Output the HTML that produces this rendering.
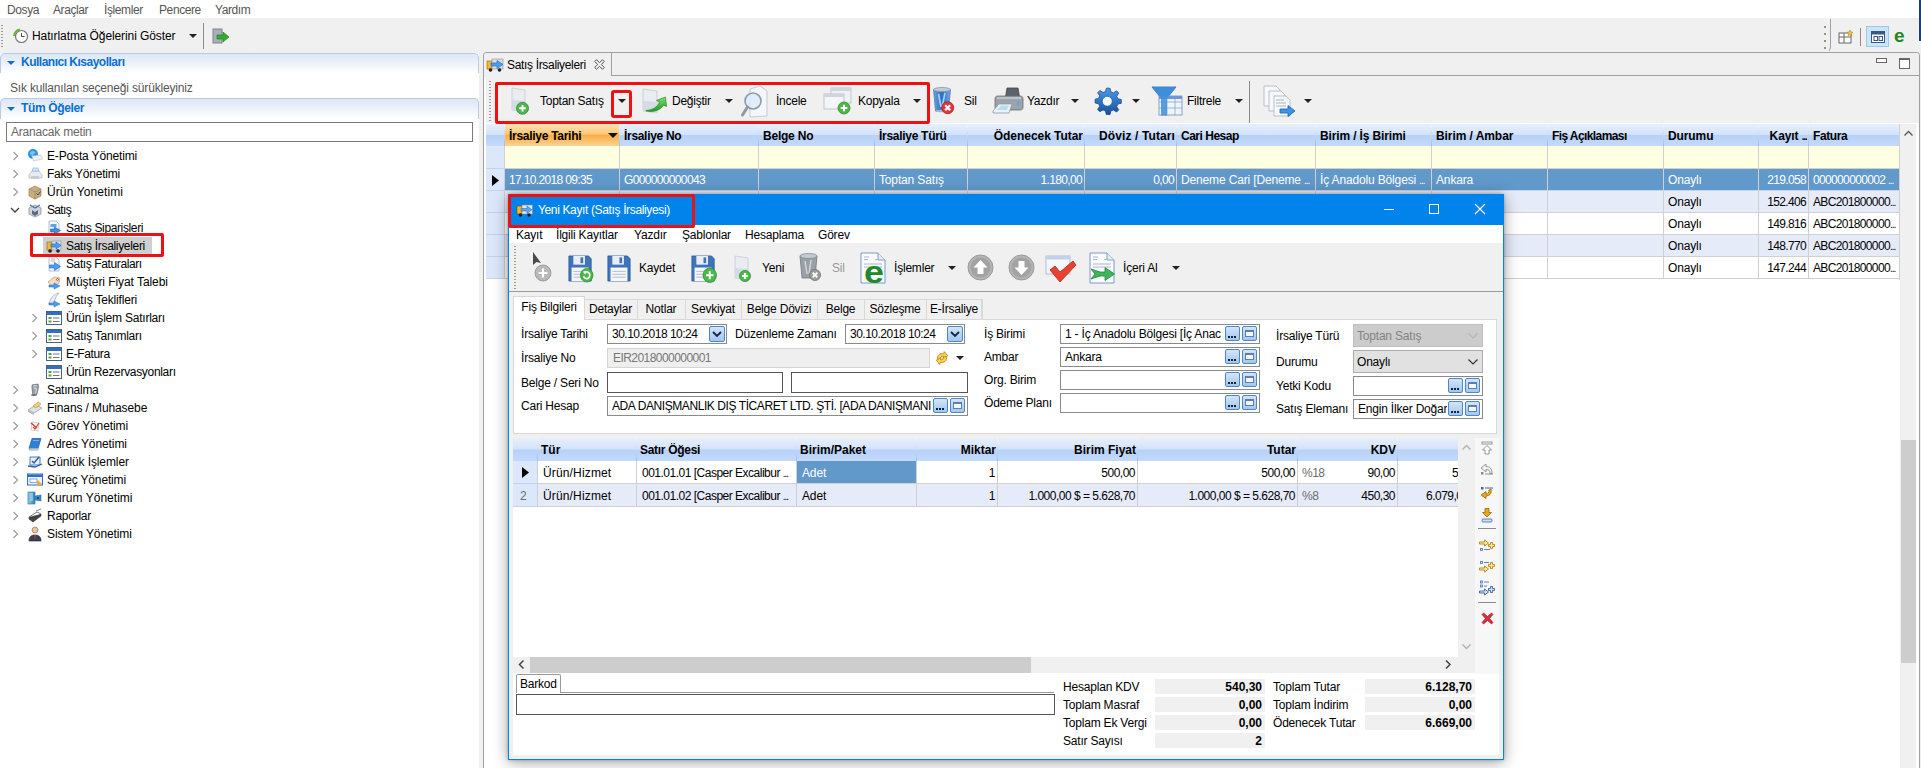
<!DOCTYPE html><html lang="tr"><head><meta charset="utf-8"><title>Satış İrsaliyeleri</title><style>
*{box-sizing:border-box;margin:0;padding:0}
html,body{width:1921px;height:768px;overflow:hidden;background:#fff}
body{font-family:"Liberation Sans",sans-serif;font-size:12px;color:#000;position:relative}
.a{position:absolute;white-space:nowrap}
.t{position:absolute;white-space:nowrap;line-height:16px;height:16px}
.b{font-weight:700}
.r{text-align:right}
.g{color:#6d6d6d}
.w{color:#fff}
svg{position:absolute;overflow:visible}
.hdr{background:linear-gradient(#e6effc 0%,#d4e3fb 48%,#b6d1f9 52%,#c3dafb 100%)}
.sec{background:linear-gradient(#dce7f6 0%,#edf2fa 50%,#fff 100%);border:1px solid #b8cbe6;border-bottom:none;border-radius:5px 5px 0 0}
.inp{background:#fff;border:1px solid #7a7a7a}
.dd{position:absolute;width:0;height:0;border-left:4px solid transparent;border-right:4px solid transparent;border-top:4px solid #222}
.eb{border:1px solid #4f86c6;background:linear-gradient(#d3e5f9,#a2c7ef);border-radius:2px}
.eb2{border:1px solid #4f86c6;background:linear-gradient(#d3e5f9,#a2c7ef);border-radius:2px}
.grip{background:repeating-linear-gradient(#a09a8e 0 1px,transparent 1px 3px)}
</style></head><body>
<div class="t " style="left:7px;top:2px;color:#555;letter-spacing:-0.4px">Dosya</div>
<div class="t " style="left:53px;top:2px;color:#555;letter-spacing:-0.4px">Araçlar</div>
<div class="t " style="left:104px;top:2px;color:#555;letter-spacing:-0.4px">İşlemler</div>
<div class="t " style="left:159px;top:2px;color:#555;letter-spacing:-0.4px">Pencere</div>
<div class="t " style="left:215px;top:2px;color:#555;letter-spacing:-0.4px">Yardım</div>
<div class="a " style="left:0px;top:18px;width:1921px;height:750px;background:#f0f0f0"></div>
<div class="t " style="left:32px;top:28px;letter-spacing:-0.1px">Hatırlatma Öğelerini Göster</div>
<div class="dd" style="left:189px;top:34px;border-top-color:#222"></div>
<div class="a " style="left:203px;top:23px;width:1px;height:26px;background:#8a8a8a"></div>
<div class="a grip" style="left:1px;top:25px;width:2px;height:22px;"></div>
<svg style="left:13px;top:28px" width="16" height="16" viewBox="0 0 16 16"><circle cx="8.5" cy="8.5" r="6" fill="#fff" stroke="#777" stroke-width="1.2"/><path d="M8.5 5v3.5h3" stroke="#444" fill="none"/><path d="M1 8a7 7 0 0 1 6-6.500" stroke="#6bb02a" stroke-width="2" fill="none"/></svg>
<svg style="left:212px;top:27px" width="18" height="18" viewBox="0 0 18 18"><rect x="1" y="2" width="9" height="14" fill="#a9aeb8" stroke="#7d838f"/><path d="M5 8h6V5l6 5-6 5v-3H5z" fill="#2fae2f" stroke="#1c7a1c" stroke-width=".6"/></svg>
<div class="a " style="left:1824px;top:26px;width:2px;height:23px;background:repeating-linear-gradient(#9c8f78 0 2px,transparent 2px 7px)"></div>
<div class="a " style="left:1823px;top:19px;width:8px;height:34px;border-right:1px solid #a0a0a0;border-bottom:1px solid transparent;border-radius:0 0 6px 0"></div>
<div class="a " style="left:1860px;top:28px;width:1px;height:18px;background:#8a8a8a"></div>
<div class="a " style="left:1866px;top:26px;width:23px;height:21px;background:#cce4f7;border:1px solid #99c9ef"></div>
<svg style="left:1838px;top:29px" width="16" height="16" viewBox="0 0 16 16"><rect x="1" y="4" width="12" height="10" fill="#fff" stroke="#666"/><path d="M1 8h12M6 4v10" stroke="#666"/><path d="M12 1l1 2 2 .3-1.500 1.400.4 2L12 5.700l-1.900 1 .4-2L9 3.300l2-.3z" fill="#f3c33c" stroke="#a07a10" stroke-width=".5"/></svg>
<svg style="left:1870px;top:29px" width="16" height="16" viewBox="0 0 16 16"><rect x="1.500" y="2.500" width="13" height="11" fill="#fff" stroke="#3b5a82"/><rect x="2" y="3" width="12" height="2.500" fill="#3b5a82"/><rect x="4" y="7.500" width="3.500" height="4" fill="none" stroke="#3b5a82"/><rect x="9" y="7.500" width="3.500" height="4" fill="none" stroke="#3b5a82"/></svg>
<div class="t " style="left:1894px;top:24px;color:#1e8a1e;font-size:19px;line-height:24px;height:24px;font-weight:700">e</div>
<div class="a " style="left:0px;top:53px;width:479px;height:715px;background:#fff"></div>
<div class="a sec" style="left:0px;top:53px;width:479px;height:20px;"></div>
<div class="a sec" style="left:0px;top:98px;width:479px;height:21px;"></div>
<div class="dd" style="left:7px;top:61px;border-top-color:#0a6fd0;border-left-width:4px;border-right-width:4px;border-top-width:4px"></div>
<div class="dd" style="left:7px;top:107px;border-top-color:#0a6fd0"></div>
<div class="t b" style="left:21px;top:54px;color:#0a6fd0;letter-spacing:-0.5px">Kullanıcı Kısayolları</div>
<div class="t b" style="left:21px;top:100px;color:#0a6fd0;letter-spacing:-0.35px">Tüm Öğeler</div>
<div class="t " style="left:10px;top:80px;color:#555;letter-spacing:-0.17px">Sık kullanılan seçeneği sürükleyiniz</div>
<div class="a inp" style="left:6px;top:122px;width:467px;height:20px;"></div>
<div class="t " style="left:11px;top:124px;color:#666;letter-spacing:-0.2px">Aranacak metin</div>
<svg style="left:12px;top:151px" width="8" height="10" viewBox="0 0 8 10"><path d="M1.500 1l4 4-4 4" fill="none" stroke="#a0a0a0" stroke-width="1.300"/></svg>
<svg style="left:27px;top:148px" width="16" height="16" viewBox="0 0 16 16"><circle cx="6" cy="6" r="5" fill="#2f8fe0"/><path d="M3 4c2-2 5-1 6 1-2 0-3 1-3 3-2 0-3-2-3-4z" fill="#7cc4f5"/><path d="M5 8l9-1 1.500 4-9 2z" fill="#eef1f5" stroke="#b9c0ca" stroke-width=".6"/></svg>
<div class="t " style="left:47px;top:148px;letter-spacing:-0.15px;">E-Posta Yönetimi</div>
<svg style="left:12px;top:169px" width="8" height="10" viewBox="0 0 8 10"><path d="M1.500 1l4 4-4 4" fill="none" stroke="#a0a0a0" stroke-width="1.300"/></svg>
<svg style="left:27px;top:166px" width="16" height="16" viewBox="0 0 16 16"><path d="M2 9l3-4h7l3 4v3H2z" fill="#e6ebf2" stroke="#aab4c2" stroke-width=".7"/><path d="M5 5l1-3h5l1 3z" fill="#cfe3f7" stroke="#8fb0d4" stroke-width=".6"/><rect x="4" y="10" width="8" height="3" fill="#c5ccd6"/></svg>
<div class="t " style="left:47px;top:166px;letter-spacing:-0.22px;">Faks Yönetimi</div>
<svg style="left:12px;top:187px" width="8" height="10" viewBox="0 0 8 10"><path d="M1.500 1l4 4-4 4" fill="none" stroke="#a0a0a0" stroke-width="1.300"/></svg>
<svg style="left:27px;top:184px" width="16" height="16" viewBox="0 0 16 16"><path d="M2 5l6-3 6 3v7l-6 3-6-3z" fill="#c9ae84" stroke="#9c8258" stroke-width=".7"/><path d="M2 5l6 3 6-3M8 8v7" stroke="#9c8258" stroke-width=".7" fill="none"/><path d="M9.500 9.500l1.500 1.500 2.500-3.500" stroke="#444" fill="none"/></svg>
<div class="t " style="left:47px;top:184px;letter-spacing:0.10px;">Ürün Yonetimi</div>
<svg style="left:10px;top:205px" width="10" height="10" viewBox="0 0 10 10"><path d="M1 3l4 4 4-4" fill="none" stroke="#404040" stroke-width="1.300"/></svg>
<svg style="left:27px;top:202px" width="16" height="16" viewBox="0 0 16 16"><path d="M2 6l6-3 6 3v6l-6 3-6-3z" fill="#cfd6de" stroke="#7c8794" stroke-width=".7"/><path d="M3 3l5 3 5-3" stroke="#4d6f99" fill="none" stroke-width="1.200"/><path d="M5 8l3 2 3-2v4l-3 2-3-2z" fill="#5b6c80"/></svg>
<div class="t " style="left:47px;top:202px;letter-spacing:-0.67px;">Satış</div>
<svg style="left:46px;top:220px" width="16" height="16" viewBox="0 0 16 16"><path d="M3 1h7l3 3v11H3z" fill="#f7fafd" stroke="#9fb1c7" stroke-width=".8"/><rect x="4.500" y="4" width="6" height="3" fill="#5ea4e6"/><path d="M4.500 9h4v-2l6 3.500-6 3.500v-2h-4z" fill="#3d8fe0" stroke="#1d63b0" stroke-width=".6"/></svg>
<div class="t " style="left:66px;top:220px;letter-spacing:-0.37px;">Satış Siparişleri</div>
<div class="a " style="left:43px;top:237px;width:109px;height:18px;background:#cfcfcf"></div>
<svg style="left:46px;top:238px" width="16" height="16" viewBox="0 0 16 16"><rect x="1" y="4" width="5" height="8" fill="#f2b632" stroke="#8a6410" stroke-width=".6"/><rect x="6" y="3" width="9" height="9" fill="#d9dde3" stroke="#8a919b" stroke-width=".6"/><path d="M5 6h5V4l5 3.500-5 3.500V9H5z" fill="#4b9ff0" stroke="#1e66b8" stroke-width=".6"/><circle cx="4" cy="13" r="1.800" fill="#222"/><circle cx="12" cy="13" r="1.800" fill="#222"/></svg>
<div class="t " style="left:66px;top:238px;letter-spacing:-0.32px;">Satış İrsaliyeleri</div>
<svg style="left:46px;top:256px" width="16" height="16" viewBox="0 0 16 16"><path d="M3 1h7l3 3v11H3z" fill="#f7fafd" stroke="#9fb1c7" stroke-width=".8"/><path d="M5 3h4M5 5h4" stroke="#9aa" stroke-width=".8"/><path d="M3.500 9h5v-2.500l6 4-6 4v-2.500h-5z" fill="#4b9ff0" stroke="#1e66b8" stroke-width=".6"/></svg>
<div class="t " style="left:66px;top:256px;letter-spacing:-0.39px;">Satış Faturaları</div>
<svg style="left:46px;top:274px" width="16" height="16" viewBox="0 0 16 16"><path d="M2 8l6-5 6 1-1 5-7 4z" fill="#f3dcc0" stroke="#c49a66" stroke-width=".7"/><circle cx="11.500" cy="5.500" r="1" fill="#fff" stroke="#a67"/><path d="M3 11h5v-2l6 3-6 3v-2H3z" fill="#4b9ff0" stroke="#1e66b8" stroke-width=".5"/></svg>
<div class="t " style="left:66px;top:274px;letter-spacing:-0.06px;">Müşteri Fiyat Talebi</div>
<svg style="left:46px;top:292px" width="16" height="16" viewBox="0 0 16 16"><path d="M3 12C4 6 8 2 13 1c-3 3-4 6-5 10z" fill="#e8edf3" stroke="#9aa7b8" stroke-width=".7"/><path d="M3 11h5v-2l6 3-6 3v-2H3z" fill="#4b9ff0" stroke="#1e66b8" stroke-width=".5"/></svg>
<div class="t " style="left:66px;top:292px;letter-spacing:-0.17px;">Satış Teklifleri</div>
<svg style="left:31px;top:313px" width="8" height="10" viewBox="0 0 8 10"><path d="M1.500 1l4 4-4 4" fill="none" stroke="#a0a0a0" stroke-width="1.300"/></svg>
<svg style="left:46px;top:310px" width="16" height="16" viewBox="0 0 16 16"><rect x=".5" y="1.500" width="15" height="13" fill="#fff" stroke="#47617f"/><rect x="1" y="2" width="14" height="3" fill="#2f6fc2"/><rect x="2.500" y="7" width="3" height="2" fill="#5aa33a"/><rect x="2.500" y="10.500" width="3" height="2" fill="#5aa33a"/><path d="M7 8h6.500M7 11.500h6.500" stroke="#777"/></svg>
<div class="t " style="left:66px;top:310px;letter-spacing:-0.22px;">Ürün İşlem Satırları</div>
<svg style="left:31px;top:331px" width="8" height="10" viewBox="0 0 8 10"><path d="M1.500 1l4 4-4 4" fill="none" stroke="#a0a0a0" stroke-width="1.300"/></svg>
<svg style="left:46px;top:328px" width="16" height="16" viewBox="0 0 16 16"><rect x=".5" y="1.500" width="15" height="13" fill="#fff" stroke="#47617f"/><rect x="1" y="2" width="14" height="3" fill="#2f6fc2"/><rect x="2.500" y="7" width="3" height="2" fill="#5aa33a"/><rect x="2.500" y="10.500" width="3" height="2" fill="#5aa33a"/><path d="M7 8h6.500M7 11.500h6.500" stroke="#777"/></svg>
<div class="t " style="left:66px;top:328px;letter-spacing:-0.27px;">Satış Tanımları</div>
<svg style="left:31px;top:349px" width="8" height="10" viewBox="0 0 8 10"><path d="M1.500 1l4 4-4 4" fill="none" stroke="#a0a0a0" stroke-width="1.300"/></svg>
<svg style="left:46px;top:346px" width="16" height="16" viewBox="0 0 16 16"><rect x=".5" y="1.500" width="15" height="13" fill="#fff" stroke="#47617f"/><rect x="1" y="2" width="14" height="3" fill="#2f6fc2"/><rect x="2.500" y="7" width="3" height="2" fill="#5aa33a"/><rect x="2.500" y="10.500" width="3" height="2" fill="#5aa33a"/><path d="M7 8h6.500M7 11.500h6.500" stroke="#777"/></svg>
<div class="t " style="left:66px;top:346px;letter-spacing:-0.37px;">E-Fatura</div>
<svg style="left:46px;top:364px" width="16" height="16" viewBox="0 0 16 16"><rect x=".5" y="1.500" width="15" height="13" fill="#fff" stroke="#47617f"/><rect x="1" y="2" width="14" height="3" fill="#2f6fc2"/><rect x="2.500" y="7" width="3" height="2" fill="#5aa33a"/><rect x="2.500" y="10.500" width="3" height="2" fill="#5aa33a"/><path d="M7 8h6.500M7 11.500h6.500" stroke="#777"/></svg>
<div class="t " style="left:66px;top:364px;letter-spacing:-0.32px;">Ürün Rezervasyonları</div>
<svg style="left:12px;top:385px" width="8" height="10" viewBox="0 0 8 10"><path d="M1.500 1l4 4-4 4" fill="none" stroke="#a0a0a0" stroke-width="1.300"/></svg>
<svg style="left:27px;top:382px" width="16" height="16" viewBox="0 0 16 16"><path d="M5 3l6-1 .5 3-1.500 7-4 2-1-8z" fill="#9aa1aa" stroke="#5c646e" stroke-width=".7"/><path d="M6 4l4-.5M6.500 6l3 .5-1 5" stroke="#e1e5ea" fill="none" stroke-width=".9"/><path d="M4 13h6" stroke="#444" stroke-width=".8"/></svg>
<div class="t " style="left:47px;top:382px;letter-spacing:-0.28px;">Satınalma</div>
<svg style="left:12px;top:403px" width="8" height="10" viewBox="0 0 8 10"><path d="M1.500 1l4 4-4 4" fill="none" stroke="#a0a0a0" stroke-width="1.300"/></svg>
<svg style="left:27px;top:400px" width="16" height="16" viewBox="0 0 16 16"><path d="M1 10l8-5 6 3-8 5z" fill="#dfe3e8" stroke="#8d96a2" stroke-width=".7"/><path d="M6 6l5-4 3 2-5 4z" fill="#f0d27a" stroke="#a8893a" stroke-width=".6"/><path d="M1 10v2l6 3v-2z" fill="#b5bcc6"/></svg>
<div class="t " style="left:47px;top:400px;letter-spacing:-0.11px;">Finans / Muhasebe</div>
<svg style="left:12px;top:421px" width="8" height="10" viewBox="0 0 8 10"><path d="M1.500 1l4 4-4 4" fill="none" stroke="#a0a0a0" stroke-width="1.300"/></svg>
<svg style="left:27px;top:418px" width="16" height="16" viewBox="0 0 16 16"><path d="M5 4l7 1-1 8-7-1z" fill="#fdfdfd" stroke="#bbb" stroke-width=".7"/><path d="M4 5l6 5" stroke="#d8432a" stroke-width="1.600"/><path d="M6 9l2 2 4-6" stroke="#d8432a" fill="none" stroke-width="1.200"/></svg>
<div class="t " style="left:47px;top:418px;letter-spacing:-0.11px;">Görev Yönetimi</div>
<svg style="left:12px;top:439px" width="8" height="10" viewBox="0 0 8 10"><path d="M1.500 1l4 4-4 4" fill="none" stroke="#a0a0a0" stroke-width="1.300"/></svg>
<svg style="left:27px;top:436px" width="16" height="16" viewBox="0 0 16 16"><path d="M5 2.500h9l-3 10H2z" fill="#2f7fd6" stroke="#1a56a0" stroke-width=".7"/><path d="M6 4.500h6" stroke="#8fc0f0" stroke-width=".8"/><path d="M2 12.500l.8 1.500h8l1-1.500" fill="#e8eef6" stroke="#5a9a5a" stroke-width=".7"/></svg>
<div class="t " style="left:47px;top:436px;letter-spacing:-0.09px;">Adres Yönetimi</div>
<svg style="left:12px;top:457px" width="8" height="10" viewBox="0 0 8 10"><path d="M1.500 1l4 4-4 4" fill="none" stroke="#a0a0a0" stroke-width="1.300"/></svg>
<svg style="left:27px;top:454px" width="16" height="16" viewBox="0 0 16 16"><path d="M3 3h10v8H3z" fill="#eaf1fb" stroke="#3c6db5" stroke-width=".9"/><path d="M5 7l2 2 5-6" stroke="#2a5cab" fill="none" stroke-width="1.500"/><path d="M1 12l7 1 7-3" stroke="#2a5cab" fill="none" stroke-width="1.300"/></svg>
<div class="t " style="left:47px;top:454px;letter-spacing:-0.10px;">Günlük İşlemler</div>
<svg style="left:12px;top:475px" width="8" height="10" viewBox="0 0 8 10"><path d="M1.500 1l4 4-4 4" fill="none" stroke="#a0a0a0" stroke-width="1.300"/></svg>
<svg style="left:27px;top:472px" width="16" height="16" viewBox="0 0 16 16"><rect x=".5" y="2" width="15" height="11" fill="#eaf3fd" stroke="#2f6fc2"/><rect x="1" y="2.500" width="14" height="2.500" fill="#2f6fc2"/><rect x="3" y="7" width="7" height="3.500" fill="#fff" stroke="#5588cc" stroke-width=".7"/><path d="M9 10l3-1.500 1 2.500 2-.5-3 4z" fill="#f5a623"/></svg>
<div class="t " style="left:47px;top:472px;letter-spacing:-0.16px;">Süreç Yönetimi</div>
<svg style="left:12px;top:493px" width="8" height="10" viewBox="0 0 8 10"><path d="M1.500 1l4 4-4 4" fill="none" stroke="#a0a0a0" stroke-width="1.300"/></svg>
<svg style="left:27px;top:490px" width="16" height="16" viewBox="0 0 16 16"><defs><linearGradient id="cg" x1="0" y1="0" x2="1" y2="0"><stop offset="0" stop-color="#8fd0e8"/><stop offset="1" stop-color="#2f7fb8"/></linearGradient></defs><rect x="1" y="2" width="7" height="12" fill="url(#cg)" stroke="#3a7ca8" stroke-width=".7"/><path d="M3 4h3M3 6h3M3 8h3M3 10h3" stroke="#d6eef8" stroke-width=".8"/><path d="M8 6l6-1v6l-6-1z" fill="#3f86c4" stroke="#2d6f9e" stroke-width=".6"/><rect x="10" y="7" width="2" height="2" fill="#1d4f80"/></svg>
<div class="t " style="left:47px;top:490px;letter-spacing:0.03px;">Kurum Yönetimi</div>
<svg style="left:12px;top:511px" width="8" height="10" viewBox="0 0 8 10"><path d="M1.500 1l4 4-4 4" fill="none" stroke="#a0a0a0" stroke-width="1.300"/></svg>
<svg style="left:27px;top:508px" width="16" height="16" viewBox="0 0 16 16"><path d="M2 9l8-5 4 2-8 6z" fill="#fff" stroke="#555" stroke-width=".8"/><path d="M2 9v2l4 3 8-6V6" fill="#444" stroke="#333" stroke-width=".6"/><path d="M9 3l5-2" stroke="#888"/></svg>
<div class="t " style="left:47px;top:508px;letter-spacing:-0.25px;">Raporlar</div>
<svg style="left:12px;top:529px" width="8" height="10" viewBox="0 0 8 10"><path d="M1.500 1l4 4-4 4" fill="none" stroke="#a0a0a0" stroke-width="1.300"/></svg>
<svg style="left:27px;top:526px" width="16" height="16" viewBox="0 0 16 16"><circle cx="8" cy="4" r="3" fill="#e9c39b" stroke="#8c6a48" stroke-width=".6"/><path d="M2 15c0-5 3-6 6-6s6 1 6 6z" fill="#3d3f52" stroke="#22232e" stroke-width=".6"/><path d="M7 9l1 5 1-5z" fill="#b93a3a"/></svg>
<div class="t " style="left:47px;top:526px;letter-spacing:-0.12px;">Sistem Yönetimi</div>
<div class="a " style="left:30px;top:233px;width:134px;height:24px;border:3px solid #ee1111;border-radius:2px"></div>
<div class="a " style="left:483px;top:52px;width:1437px;height:716px;background:#fff;border:1px solid #a0a0a0;border-bottom:none;border-radius:4px 4px 0 0"></div>
<div class="a " style="left:484px;top:53px;width:1435px;height:70px;background:#f0f0f0;border-radius:3px 3px 0 0"></div>
<div class="a " style="left:611px;top:75px;width:1308px;height:1px;background:#a0a0a0"></div>
<div class="a " style="left:611px;top:53px;width:1px;height:23px;background:#a0a0a0"></div>
<svg style="left:487px;top:57px" width="17" height="15" viewBox="0 0 17 15"><rect x="0" y="4" width="5" height="8" fill="#f2b632" stroke="#8a6410" stroke-width=".6"/><rect x="5" y="2" width="11" height="10" fill="#d9dde3" stroke="#8a919b" stroke-width=".6"/><path d="M4 6h6V3.500l6 4-6 4V9H4z" fill="#4b9ff0" stroke="#1e66b8" stroke-width=".6"/><circle cx="3.500" cy="13" r="1.800" fill="#222"/><circle cx="12.500" cy="13" r="1.800" fill="#222"/></svg>
<div class="t " style="left:507px;top:57px;letter-spacing:-0.33px">Satış İrsaliyeleri</div>
<div class="a " style="left:484px;top:77px;width:2px;height:47px;background:#fff"></div>
<svg style="left:594px;top:59px" width="11" height="11" viewBox="0 0 11 11"><path d="M.8 2.500L2.500.8 5.500 3.700 8.500.8l1.700 1.700L7.300 5.500l2.900 3-1.700 1.700-3-2.900-3 2.900L.8 8.500l2.900-3z" fill="#fff" stroke="#444" stroke-width="1"/></svg>
<div class="a " style="left:1876px;top:58px;width:11px;height:5px;border:1px solid #666;background:#fff"></div>
<div class="a " style="left:1899px;top:58px;width:11px;height:11px;border:1px solid #666;background:#fff;border-top-width:2px"></div>
<div class="a grip" style="left:489px;top:81px;width:2px;height:42px;"></div>
<div class="t " style="left:540px;top:93px;letter-spacing:-0.25px">Toptan Satış</div>
<div class="t " style="left:672px;top:93px;letter-spacing:-0.25px">Değiştir</div>
<div class="t " style="left:776px;top:93px;letter-spacing:-0.25px">İncele</div>
<div class="t " style="left:858px;top:93px;letter-spacing:-0.25px">Kopyala</div>
<div class="t " style="left:964px;top:93px;letter-spacing:-0.25px">Sil</div>
<div class="t " style="left:1027px;top:93px;letter-spacing:-0.25px">Yazdır</div>
<div class="t " style="left:1187px;top:93px;letter-spacing:-0.25px">Filtrele</div>
<div class="dd" style="left:618px;top:99px;border-top-color:#222"></div>
<div class="dd" style="left:725px;top:99px;border-top-color:#222"></div>
<div class="dd" style="left:913px;top:99px;border-top-color:#222"></div>
<div class="dd" style="left:1071px;top:99px;border-top-color:#222"></div>
<div class="dd" style="left:1132px;top:99px;border-top-color:#222"></div>
<div class="dd" style="left:1235px;top:99px;border-top-color:#222"></div>
<div class="dd" style="left:1304px;top:99px;border-top-color:#222"></div>
<div class="a " style="left:1249px;top:81px;width:1px;height:42px;background:#8a8a8a"></div>
<svg style="left:508px;top:86px" width="24" height="30" viewBox="0 0 24 30"><path d="M4 2l13 2v22L4 24z" fill="#e9edf2" stroke="#c3cad3" stroke-width=".8"/><path d="M4 14l13 1v11L4 24z" fill="#d5dbe3"/><circle cx="14.5" cy="22.3" r="6" fill="#4cb848" stroke="#2d8a2d" stroke-width=".8"/><path d="M11.2 22.3h6.6000000000000005M14.5 19.0v6.6000000000000005" stroke="#fff" stroke-width="2"/></svg>
<svg style="left:640px;top:86px" width="28" height="30" viewBox="0 0 28 30"><defs><linearGradient id="gg" x1="0" y1="0" x2="0" y2="1"><stop offset="0" stop-color="#7be06a"/><stop offset="1" stop-color="#1f9a2a"/></linearGradient></defs><path d="M3 3l14 2v22L3 25z" fill="#e9edf2" stroke="#c3cad3" stroke-width=".8"/><path d="M3 15l14 1v11L3 25z" fill="#d5dbe3"/><path d="M6 24.500c7-.5 11.500-3.500 13.500-8.500l-3-1.500 9-3.500 1 9.500-3-1.500c-3 5-9 7.500-17.500 6z" fill="url(#gg)" stroke="#1f8a1f" stroke-width=".7"/></svg>
<svg style="left:740px;top:84px" width="30" height="34" viewBox="0 0 30 34"><path d="M10 5l10-3 7 5v25l-17 1z" fill="#f4f6f9" stroke="#b8c0ca" stroke-width=".8"/><circle cx="13" cy="17" r="8" fill="#dcecfb" fill-opacity=".85" stroke="#8d99a8" stroke-width="1.600"/><path d="M7.500 23l-5 8" stroke="#8d99a8" stroke-width="3" stroke-linecap="round"/></svg>
<svg style="left:822px;top:86px" width="32" height="30" viewBox="0 0 32 30"><rect x="9" y="2" width="20" height="15" fill="#eef1f5" stroke="#b3bbc6" stroke-width=".8"/><rect x="9" y="2" width="20" height="3" fill="#cdd5df"/><rect x="2" y="8" width="20" height="15" fill="#f3f5f8" stroke="#b3bbc6" stroke-width=".8"/><rect x="2" y="8" width="20" height="3" fill="#cdd5df"/><circle cx="22" cy="22" r="6" fill="#4cb848" stroke="#2d8a2d" stroke-width=".8"/><path d="M18.7 22h6.6000000000000005M22 18.7v6.6000000000000005" stroke="#fff" stroke-width="2"/></svg>
<svg style="left:932px;top:86px" width="28" height="30" viewBox="0 0 28 30"><defs><linearGradient id="tg" x1="0" y1="0" x2="1" y2="0"><stop offset="0" stop-color="#5fa4e6"/><stop offset=".5" stop-color="#2f6fc0"/><stop offset="1" stop-color="#6aaae8"/></linearGradient></defs><path d="M1.500 3.500h17l-2 21.500H3.500z" fill="url(#tg)" stroke="#5d7fa8" stroke-width=".8"/><ellipse cx="10" cy="3.500" rx="8.500" ry="2" fill="#c3ccd6" stroke="#8c98a6" stroke-width=".8"/><path d="M6.500 8l2.500 13M13 7l-3 14" stroke="#a9d0f5" stroke-width="1.600"/><ellipse cx="10" cy="25" rx="6.500" ry="1.300" fill="#aab4c0"/><circle cx="15.700" cy="21.700" r="6" fill="#e0383a" stroke="#a81f1f" stroke-width=".8"/><path d="M13.200 19.200l5 5M18.200 19.200l-5 5" stroke="#fff" stroke-width="2.200"/></svg>
<svg style="left:992px;top:87px" width="32" height="28" viewBox="0 0 32 28"><path d="M15 1h11l1.500 9H13.500z" fill="#5c626b" stroke="#3f444b" stroke-width=".8"/><path d="M6 9h22c2 0 3 1 3 3v8c0 2-1 3-3 3H6c-2 0-3-1-3-3v-8c0-2 1-3 3-3z" fill="#9da3ab" stroke="#676d75" stroke-width=".8"/><path d="M5 11h24" stroke="#c9ced4" stroke-width="1.500"/><path d="M1 24l6-7h13l-3 9H1z" fill="#eaf3fa" stroke="#8e97a3" stroke-width=".8"/><path d="M5 23l4-4.500h8l-2 4.500z" fill="#b9ddf0"/><rect x="25" y="14" width="2.500" height="5" fill="#6fa0dd"/></svg>
<svg style="left:1093.5px;top:87.5px" width="26.5" height="26.5" viewBox="0 0 28 28"><defs><linearGradient id="bg1" x1="0" y1="0" x2="0" y2="1"><stop offset="0" stop-color="#4a9cea"/><stop offset="1" stop-color="#174f9c"/></linearGradient></defs><path d="M14 0l3 .4.8 3.600 2.700 1.200L23.800 3l2.400 2.400-2.200 3.300 1.200 2.700 3.600.8v4l-3.600.8-1.200 2.700 2.200 3.300-2.400 2.400-3.300-2.200-2.700 1.200-.8 3.600h-4l-.8-3.600-2.700-1.200L6.200 25 3.800 22.600 6 19.300l-1.200-2.700-3.600-.8v-4l3.600-.8L6 8.300 3.800 5 6.200 2.600 9.500 4.800l2.700-1.200.8-3.200z" fill="url(#bg1)" stroke="#154584" stroke-width=".8"/><circle cx="14" cy="14" r="5.300" fill="#f4f8fc" stroke="#1a569c" stroke-width=".8"/></svg>
<svg style="left:1151px;top:86px" width="32" height="32" viewBox="0 0 32 32"><path d="M1 1h24l-9 11v17h-6V12z" fill="#3d8fdc" stroke="#1f62ac" stroke-width=".8"/><rect x="8" y="10" width="23" height="19" fill="#eef4fb" stroke="#6d8fc0" stroke-width=".8"/><path d="M8 16h23M8 22h23M16 10v19M24 10v19" stroke="#8aa7d2" stroke-width=".8"/><rect x="8" y="10" width="23" height="3" fill="#6f96d6"/><path d="M1 1h24l-9 11v17h-6V12z" fill="#3d8fdc" fill-opacity=".85"/></svg>
<svg style="left:1262px;top:85px" width="32" height="32" viewBox="0 0 32 32"><path d="M2 1h12l4 4v16H2z" fill="#f6f8fb" stroke="#aab4c2" stroke-width=".8"/><path d="M7 6h12l4 4v16H7z" fill="#f6f8fb" stroke="#aab4c2" stroke-width=".8"/><path d="M12 11h12l4 4v16H12z" fill="#f6f8fb" stroke="#aab4c2" stroke-width=".8"/><path d="M14 15h8M14 18h10M14 21h10" stroke="#9aa5b3" stroke-width=".8"/><path d="M18 24h8v-3.500l7 5.500-7 5.500V28h-8z" fill="#3d93e6" stroke="#1c62b0" stroke-width=".8"/></svg>
<div class="a " style="left:495px;top:82px;width:435px;height:42px;border:3px solid #ee1111;border-radius:2px"></div>
<div class="a " style="left:611px;top:90px;width:21px;height:28px;border:3px solid #ee1111;border-radius:3px"></div>
<div class="a hdr" style="left:486px;top:124px;width:1413px;height:22px;"></div>
<div class="a " style="left:504px;top:124px;width:115px;height:22px;background:linear-gradient(#fde3b6 0%,#fbc878 45%,#f9ae45 52%,#fcd294 100%)"></div>
<div class="a " style="left:504px;top:124px;width:1px;height:22px;background:linear-gradient(#f2f6fd,#9fbde8)"></div>
<div class="t b" style="left:509px;top:128px;width:109px;overflow:hidden;letter-spacing:-0.28px;">İrsaliye Tarihi</div>
<div class="a " style="left:619px;top:124px;width:1px;height:22px;background:linear-gradient(#f2f6fd,#9fbde8)"></div>
<div class="t b" style="left:624px;top:128px;width:133px;overflow:hidden;letter-spacing:-0.31px;">İrsaliye No</div>
<div class="a " style="left:758px;top:124px;width:1px;height:22px;background:linear-gradient(#f2f6fd,#9fbde8)"></div>
<div class="t b" style="left:763px;top:128px;width:110px;overflow:hidden;letter-spacing:-0.22px;">Belge No</div>
<div class="a " style="left:874px;top:124px;width:1px;height:22px;background:linear-gradient(#f2f6fd,#9fbde8)"></div>
<div class="t b" style="left:879px;top:128px;width:87px;overflow:hidden;letter-spacing:-0.29px;">İrsaliye Türü</div>
<div class="a " style="left:967px;top:124px;width:1px;height:22px;background:linear-gradient(#f2f6fd,#9fbde8)"></div>
<div class="t b r" style="left:967px;top:128px;width:116px;overflow:hidden;letter-spacing:-0.04px;">Ödenecek Tutar</div>
<div class="a " style="left:1084px;top:124px;width:1px;height:22px;background:linear-gradient(#f2f6fd,#9fbde8)"></div>
<div class="t b r" style="left:1084px;top:128px;width:91px;overflow:hidden;letter-spacing:0.11px;">Döviz / Tutarı</div>
<div class="a " style="left:1176px;top:124px;width:1px;height:22px;background:linear-gradient(#f2f6fd,#9fbde8)"></div>
<div class="t b" style="left:1181px;top:128px;width:133px;overflow:hidden;letter-spacing:-0.49px;">Cari Hesap</div>
<div class="a " style="left:1315px;top:124px;width:1px;height:22px;background:linear-gradient(#f2f6fd,#9fbde8)"></div>
<div class="t b" style="left:1320px;top:128px;width:110px;overflow:hidden;letter-spacing:-0.14px;">Birim / İş Birimi</div>
<div class="a " style="left:1431px;top:124px;width:1px;height:22px;background:linear-gradient(#f2f6fd,#9fbde8)"></div>
<div class="t b" style="left:1436px;top:128px;width:110px;overflow:hidden;letter-spacing:-0.07px;">Birim / Ambar</div>
<div class="a " style="left:1547px;top:124px;width:1px;height:22px;background:linear-gradient(#f2f6fd,#9fbde8)"></div>
<div class="t b" style="left:1552px;top:128px;width:110px;overflow:hidden;letter-spacing:-0.59px;">Fiş Açıklaması</div>
<div class="a " style="left:1663px;top:124px;width:1px;height:22px;background:linear-gradient(#f2f6fd,#9fbde8)"></div>
<div class="t b" style="left:1668px;top:128px;width:89px;overflow:hidden;letter-spacing:-0.10px;">Durumu</div>
<div class="a " style="left:1758px;top:124px;width:1px;height:22px;background:linear-gradient(#f2f6fd,#9fbde8)"></div>
<div class="t b r" style="left:1758px;top:128px;width:49px;overflow:hidden;letter-spacing:-0.1px">Kayıt <span style="letter-spacing:-1px;font-size:10px">...</span></div>
<div class="a " style="left:1808px;top:124px;width:1px;height:22px;background:linear-gradient(#f2f6fd,#9fbde8)"></div>
<div class="t b" style="left:1813px;top:128px;width:85px;overflow:hidden;letter-spacing:-0.40px;">Fatura</div>
<div class="dd" style="left:608px;top:133px;border-top-color:#111;border-left-width:5px;border-right-width:5px;border-top-width:5px"></div>
<div class="a " style="left:486px;top:146px;width:18px;height:23px;background:#dbe7fa;border-bottom:1px solid #c5d3ea"></div>
<div class="a " style="left:504px;top:146px;width:1395px;height:23px;background:#ffffe1;border-bottom:1px solid #d0d0d0"></div>
<div class="a " style="left:504px;top:146px;width:1px;height:23px;background:#d0d0d0"></div>
<div class="a " style="left:619px;top:146px;width:1px;height:23px;background:#d0d0d0"></div>
<div class="a " style="left:758px;top:146px;width:1px;height:23px;background:#d0d0d0"></div>
<div class="a " style="left:874px;top:146px;width:1px;height:23px;background:#d0d0d0"></div>
<div class="a " style="left:967px;top:146px;width:1px;height:23px;background:#d0d0d0"></div>
<div class="a " style="left:1084px;top:146px;width:1px;height:23px;background:#d0d0d0"></div>
<div class="a " style="left:1176px;top:146px;width:1px;height:23px;background:#d0d0d0"></div>
<div class="a " style="left:1315px;top:146px;width:1px;height:23px;background:#d0d0d0"></div>
<div class="a " style="left:1431px;top:146px;width:1px;height:23px;background:#d0d0d0"></div>
<div class="a " style="left:1547px;top:146px;width:1px;height:23px;background:#d0d0d0"></div>
<div class="a " style="left:1663px;top:146px;width:1px;height:23px;background:#d0d0d0"></div>
<div class="a " style="left:1758px;top:146px;width:1px;height:23px;background:#d0d0d0"></div>
<div class="a " style="left:1808px;top:146px;width:1px;height:23px;background:#d0d0d0"></div>
<div class="a " style="left:486px;top:169px;width:18px;height:22px;background:#dbe7fa;border-bottom:1px solid #c5d3ea"></div>
<div class="a " style="left:504px;top:169px;width:1395px;height:22px;background:#6199cb;border-bottom:1px solid #c9d3e6"></div>
<div class="a " style="left:504px;top:169px;width:1px;height:22px;background:#d0d0d0"></div>
<div class="t w" style="left:509px;top:172px;width:109px;letter-spacing:-0.65px;overflow:hidden">17.10.2018 09:35</div>
<div class="a " style="left:619px;top:169px;width:1px;height:22px;background:#d0d0d0"></div>
<div class="t w" style="left:624px;top:172px;width:133px;letter-spacing:-0.65px;overflow:hidden">G000000000043</div>
<div class="a " style="left:758px;top:169px;width:1px;height:22px;background:#d0d0d0"></div>
<div class="a " style="left:874px;top:169px;width:1px;height:22px;background:#d0d0d0"></div>
<div class="t w" style="left:879px;top:172px;width:87px;letter-spacing:-0.15px;overflow:hidden">Toptan Satış</div>
<div class="a " style="left:967px;top:169px;width:1px;height:22px;background:#d0d0d0"></div>
<div class="t w r" style="left:967px;top:172px;width:115px;letter-spacing:-0.65px;">1.180,00</div>
<div class="a " style="left:1084px;top:169px;width:1px;height:22px;background:#d0d0d0"></div>
<div class="t w r" style="left:1084px;top:172px;width:90px;letter-spacing:-0.65px;">0,00</div>
<div class="a " style="left:1176px;top:169px;width:1px;height:22px;background:#d0d0d0"></div>
<div class="t w" style="left:1181px;top:172px;width:133px;letter-spacing:-0.15px;overflow:hidden">Deneme Cari [Deneme <span style="letter-spacing:-1px;font-size:10px">...</span></div>
<div class="a " style="left:1315px;top:169px;width:1px;height:22px;background:#d0d0d0"></div>
<div class="t w" style="left:1320px;top:172px;width:110px;letter-spacing:-0.15px;overflow:hidden">İç Anadolu Bölgesi <span style="letter-spacing:-1px;font-size:10px">...</span></div>
<div class="a " style="left:1431px;top:169px;width:1px;height:22px;background:#d0d0d0"></div>
<div class="t w" style="left:1436px;top:172px;width:110px;letter-spacing:-0.15px;overflow:hidden">Ankara</div>
<div class="a " style="left:1547px;top:169px;width:1px;height:22px;background:#d0d0d0"></div>
<div class="a " style="left:1663px;top:169px;width:1px;height:22px;background:#d0d0d0"></div>
<div class="t w" style="left:1668px;top:172px;width:89px;letter-spacing:-0.15px;overflow:hidden">Onaylı</div>
<div class="a " style="left:1758px;top:169px;width:1px;height:22px;background:#d0d0d0"></div>
<div class="t w r" style="left:1758px;top:172px;width:48px;letter-spacing:-0.65px;">219.058</div>
<div class="a " style="left:1808px;top:169px;width:1px;height:22px;background:#d0d0d0"></div>
<div class="t w" style="left:1813px;top:172px;width:85px;letter-spacing:-0.65px;overflow:hidden">000000000002 <span style="letter-spacing:-1px;font-size:10px">...</span></div>
<div class="a " style="left:486px;top:191px;width:18px;height:22px;background:#dbe7fa;border-bottom:1px solid #c5d3ea"></div>
<div class="a " style="left:504px;top:191px;width:1395px;height:22px;background:#e6ebfa;border-bottom:1px solid #d0d0d0"></div>
<div class="a " style="left:504px;top:191px;width:1px;height:22px;background:#d0d0d0"></div>
<div class="a " style="left:619px;top:191px;width:1px;height:22px;background:#d0d0d0"></div>
<div class="a " style="left:758px;top:191px;width:1px;height:22px;background:#d0d0d0"></div>
<div class="a " style="left:874px;top:191px;width:1px;height:22px;background:#d0d0d0"></div>
<div class="a " style="left:967px;top:191px;width:1px;height:22px;background:#d0d0d0"></div>
<div class="a " style="left:1084px;top:191px;width:1px;height:22px;background:#d0d0d0"></div>
<div class="a " style="left:1176px;top:191px;width:1px;height:22px;background:#d0d0d0"></div>
<div class="a " style="left:1315px;top:191px;width:1px;height:22px;background:#d0d0d0"></div>
<div class="a " style="left:1431px;top:191px;width:1px;height:22px;background:#d0d0d0"></div>
<div class="a " style="left:1547px;top:191px;width:1px;height:22px;background:#d0d0d0"></div>
<div class="a " style="left:1663px;top:191px;width:1px;height:22px;background:#d0d0d0"></div>
<div class="t " style="left:1668px;top:194px;width:89px;letter-spacing:-0.15px;overflow:hidden">Onaylı</div>
<div class="a " style="left:1758px;top:191px;width:1px;height:22px;background:#d0d0d0"></div>
<div class="t  r" style="left:1758px;top:194px;width:48px;letter-spacing:-0.65px;">152.406</div>
<div class="a " style="left:1808px;top:191px;width:1px;height:22px;background:#d0d0d0"></div>
<div class="t " style="left:1813px;top:194px;width:85px;letter-spacing:-0.65px;overflow:hidden">ABC201800000<span style="letter-spacing:-1px;font-size:10px">...</span></div>
<div class="a " style="left:486px;top:213px;width:18px;height:22px;background:#dbe7fa;border-bottom:1px solid #c5d3ea"></div>
<div class="a " style="left:504px;top:213px;width:1395px;height:22px;background:#fff;border-bottom:1px solid #d0d0d0"></div>
<div class="a " style="left:504px;top:213px;width:1px;height:22px;background:#d0d0d0"></div>
<div class="a " style="left:619px;top:213px;width:1px;height:22px;background:#d0d0d0"></div>
<div class="a " style="left:758px;top:213px;width:1px;height:22px;background:#d0d0d0"></div>
<div class="a " style="left:874px;top:213px;width:1px;height:22px;background:#d0d0d0"></div>
<div class="a " style="left:967px;top:213px;width:1px;height:22px;background:#d0d0d0"></div>
<div class="a " style="left:1084px;top:213px;width:1px;height:22px;background:#d0d0d0"></div>
<div class="a " style="left:1176px;top:213px;width:1px;height:22px;background:#d0d0d0"></div>
<div class="a " style="left:1315px;top:213px;width:1px;height:22px;background:#d0d0d0"></div>
<div class="a " style="left:1431px;top:213px;width:1px;height:22px;background:#d0d0d0"></div>
<div class="a " style="left:1547px;top:213px;width:1px;height:22px;background:#d0d0d0"></div>
<div class="a " style="left:1663px;top:213px;width:1px;height:22px;background:#d0d0d0"></div>
<div class="t " style="left:1668px;top:216px;width:89px;letter-spacing:-0.15px;overflow:hidden">Onaylı</div>
<div class="a " style="left:1758px;top:213px;width:1px;height:22px;background:#d0d0d0"></div>
<div class="t  r" style="left:1758px;top:216px;width:48px;letter-spacing:-0.65px;">149.816</div>
<div class="a " style="left:1808px;top:213px;width:1px;height:22px;background:#d0d0d0"></div>
<div class="t " style="left:1813px;top:216px;width:85px;letter-spacing:-0.65px;overflow:hidden">ABC201800000<span style="letter-spacing:-1px;font-size:10px">...</span></div>
<div class="a " style="left:486px;top:235px;width:18px;height:22px;background:#dbe7fa;border-bottom:1px solid #c5d3ea"></div>
<div class="a " style="left:504px;top:235px;width:1395px;height:22px;background:#e6ebfa;border-bottom:1px solid #d0d0d0"></div>
<div class="a " style="left:504px;top:235px;width:1px;height:22px;background:#d0d0d0"></div>
<div class="a " style="left:619px;top:235px;width:1px;height:22px;background:#d0d0d0"></div>
<div class="a " style="left:758px;top:235px;width:1px;height:22px;background:#d0d0d0"></div>
<div class="a " style="left:874px;top:235px;width:1px;height:22px;background:#d0d0d0"></div>
<div class="a " style="left:967px;top:235px;width:1px;height:22px;background:#d0d0d0"></div>
<div class="a " style="left:1084px;top:235px;width:1px;height:22px;background:#d0d0d0"></div>
<div class="a " style="left:1176px;top:235px;width:1px;height:22px;background:#d0d0d0"></div>
<div class="a " style="left:1315px;top:235px;width:1px;height:22px;background:#d0d0d0"></div>
<div class="a " style="left:1431px;top:235px;width:1px;height:22px;background:#d0d0d0"></div>
<div class="a " style="left:1547px;top:235px;width:1px;height:22px;background:#d0d0d0"></div>
<div class="a " style="left:1663px;top:235px;width:1px;height:22px;background:#d0d0d0"></div>
<div class="t " style="left:1668px;top:238px;width:89px;letter-spacing:-0.15px;overflow:hidden">Onaylı</div>
<div class="a " style="left:1758px;top:235px;width:1px;height:22px;background:#d0d0d0"></div>
<div class="t  r" style="left:1758px;top:238px;width:48px;letter-spacing:-0.65px;">148.770</div>
<div class="a " style="left:1808px;top:235px;width:1px;height:22px;background:#d0d0d0"></div>
<div class="t " style="left:1813px;top:238px;width:85px;letter-spacing:-0.65px;overflow:hidden">ABC201800000<span style="letter-spacing:-1px;font-size:10px">...</span></div>
<div class="a " style="left:486px;top:257px;width:18px;height:22px;background:#dbe7fa;border-bottom:1px solid #c5d3ea"></div>
<div class="a " style="left:504px;top:257px;width:1395px;height:22px;background:#fff;border-bottom:1px solid #d0d0d0"></div>
<div class="a " style="left:504px;top:257px;width:1px;height:22px;background:#d0d0d0"></div>
<div class="a " style="left:619px;top:257px;width:1px;height:22px;background:#d0d0d0"></div>
<div class="a " style="left:758px;top:257px;width:1px;height:22px;background:#d0d0d0"></div>
<div class="a " style="left:874px;top:257px;width:1px;height:22px;background:#d0d0d0"></div>
<div class="a " style="left:967px;top:257px;width:1px;height:22px;background:#d0d0d0"></div>
<div class="a " style="left:1084px;top:257px;width:1px;height:22px;background:#d0d0d0"></div>
<div class="a " style="left:1176px;top:257px;width:1px;height:22px;background:#d0d0d0"></div>
<div class="a " style="left:1315px;top:257px;width:1px;height:22px;background:#d0d0d0"></div>
<div class="a " style="left:1431px;top:257px;width:1px;height:22px;background:#d0d0d0"></div>
<div class="a " style="left:1547px;top:257px;width:1px;height:22px;background:#d0d0d0"></div>
<div class="a " style="left:1663px;top:257px;width:1px;height:22px;background:#d0d0d0"></div>
<div class="t " style="left:1668px;top:260px;width:89px;letter-spacing:-0.15px;overflow:hidden">Onaylı</div>
<div class="a " style="left:1758px;top:257px;width:1px;height:22px;background:#d0d0d0"></div>
<div class="t  r" style="left:1758px;top:260px;width:48px;letter-spacing:-0.65px;">147.244</div>
<div class="a " style="left:1808px;top:257px;width:1px;height:22px;background:#d0d0d0"></div>
<div class="t " style="left:1813px;top:260px;width:85px;letter-spacing:-0.65px;overflow:hidden">ABC201800000<span style="letter-spacing:-1px;font-size:10px">...</span></div>
<svg style="left:492px;top:175px" width="8" height="11" viewBox="0 0 8 11"><path d="M0 0l7 5.500-7 5.500z" fill="#000"/></svg>
<div class="a " style="left:1899px;top:124px;width:1px;height:156px;background:#d0d0d0"></div>
<div class="a " style="left:1900px;top:124px;width:16px;height:644px;background:#f0f0f0"></div>
<div class="a " style="left:1901px;top:440px;width:15px;height:223px;background:#cdcdcd"></div>
<svg style="left:1904px;top:130px" width="9" height="6" viewBox="0 0 9 6"><path d="M.5 5.500l4-4 4 4" fill="none" stroke="#555" stroke-width="1.300"/></svg>
<div class="a " style="left:1919px;top:0px;width:2px;height:41px;background:#1f3f74"></div>
<div class="a " style="left:508px;top:194px;width:996px;height:566px;background:#f0f0f0;border:1px solid #0084ec;box-shadow:0 2px 14px rgba(0,0,0,.38),0 0 3px rgba(0,0,0,.25)"></div>
<div class="a " style="left:509px;top:195px;width:994px;height:30px;background:#0084ec"></div>
<svg style="left:517px;top:203px" width="16" height="14" viewBox="0 0 16 14"><rect x="0" y="3" width="5" height="8" fill="#f2b632" stroke="#6e4e0a" stroke-width=".6"/><rect x="5" y="2" width="10.500" height="9" fill="#e3e7ec" stroke="#7d8590" stroke-width=".6"/><path d="M4 5.500h6V3l5 3.800-5 3.800V8H4z" fill="#58a8f5" stroke="#1e66b8" stroke-width=".5"/><circle cx="3.500" cy="12" r="1.700" fill="#222"/><circle cx="12" cy="12" r="1.700" fill="#222"/></svg>
<div class="t w" style="left:538px;top:202px;letter-spacing:-0.36px;">Yeni Kayıt (Satış İrsaliyesi)</div>
<div class="a " style="left:1384px;top:209px;width:10px;height:1px;background:#fff"></div>
<div class="a " style="left:1429px;top:204px;width:10px;height:10px;border:1px solid #fff"></div>
<svg style="left:1474px;top:203px" width="12" height="12" viewBox="0 0 12 12"><path d="M1 1l10 10M11 1L1 11" stroke="#fff" stroke-width="1.200"/></svg>
<div class="a " style="left:509px;top:225px;width:994px;height:18px;background:#fff"></div>
<div class="t " style="left:516px;top:227px;letter-spacing:-0.2px">Kayıt</div>
<div class="t " style="left:556px;top:227px;letter-spacing:-0.2px">İlgili Kayıtlar</div>
<div class="t " style="left:634px;top:227px;letter-spacing:-0.2px">Yazdır</div>
<div class="t " style="left:682px;top:227px;letter-spacing:-0.2px">Şablonlar</div>
<div class="t " style="left:745px;top:227px;letter-spacing:-0.2px">Hesaplama</div>
<div class="t " style="left:818px;top:227px;letter-spacing:-0.2px">Görev</div>
<div class="a " style="left:508px;top:194px;width:187px;height:34px;border:3px solid #ee1111;border-radius:2px"></div>
<div class="a " style="left:509px;top:291px;width:994px;height:1px;background:#9a9a9a"></div>
<div class="a grip" style="left:514px;top:246px;width:2px;height:43px;"></div>
<div class="t " style="left:639px;top:260px;color:#000;letter-spacing:-0.2px">Kaydet</div>
<div class="t " style="left:762px;top:260px;color:#000;letter-spacing:-0.2px">Yeni</div>
<div class="t " style="left:832px;top:260px;color:#9a9a9a;letter-spacing:-0.2px">Sil</div>
<div class="t " style="left:894px;top:260px;color:#000;letter-spacing:-0.2px">İşlemler</div>
<div class="t " style="left:1123px;top:260px;color:#000;letter-spacing:-0.2px">İçeri Al</div>
<div class="dd" style="left:948px;top:266px;border-top-color:#222"></div>
<div class="dd" style="left:1172px;top:266px;border-top-color:#222"></div>
<svg style="left:532px;top:252px" width="22" height="30" viewBox="0 0 22 30"><path d="M1 0v13l3.500-3 4.500 1z" fill="#4a4a4a"/><circle cx="11" cy="21" r="8" fill="#b9b9b9" stroke="#8f8f8f" stroke-width=".8"/><path d="M6.6 21h8.8M11 16.6v8.8" stroke="#fff" stroke-width="2.200"/></svg>
<svg style="left:568px;top:253.5px" width="25" height="29" viewBox="0 0 28 30" preserveAspectRatio="none"><path d="M1 2h22l3 3v23H1z" fill="#3f74bd" stroke="#2a5291" stroke-width=".8"/><rect x="6" y="2" width="13" height="9" fill="#e9eef5"/><rect x="14" y="3.500" width="3" height="6" fill="#3f74bd"/><rect x="4" y="14" width="19" height="14" fill="#f4f6f9"/><path d="M6 18h15M6 21h15M6 24h15" stroke="#aab3c0" stroke-width=".9"/><circle cx="21" cy="22" r="7" fill="#4cb848" stroke="#2d8a2d" stroke-width=".8"/><path d="M17.500 23a3.500 3.500 0 1 0 1.500-4" fill="none" stroke="#fff" stroke-width="1.800"/><path d="M16.500 18l4-.5-1 4z" fill="#fff"/></svg>
<svg style="left:607px;top:253.5px" width="24" height="29" viewBox="0 0 27 30" preserveAspectRatio="none"><path d="M1 2h22l3 3v23H1z" fill="#3f74bd" stroke="#2a5291" stroke-width=".8"/><rect x="6" y="2" width="13" height="9" fill="#e9eef5"/><rect x="14" y="3.500" width="3" height="6" fill="#3f74bd"/><rect x="4" y="14" width="19" height="14" fill="#f4f6f9"/><path d="M6 18h15M6 21h15M6 24h15" stroke="#aab3c0" stroke-width=".9"/></svg>
<svg style="left:691px;top:253.5px" width="25" height="29" viewBox="0 0 28 30" preserveAspectRatio="none"><path d="M1 2h22l3 3v23H1z" fill="#3f74bd" stroke="#2a5291" stroke-width=".8"/><rect x="6" y="2" width="13" height="9" fill="#e9eef5"/><rect x="14" y="3.500" width="3" height="6" fill="#3f74bd"/><rect x="4" y="14" width="19" height="14" fill="#f4f6f9"/><path d="M6 18h15M6 21h15M6 24h15" stroke="#aab3c0" stroke-width=".9"/><circle cx="21" cy="22" r="7.5" fill="#4cb848" stroke="#2d8a2d" stroke-width=".8"/><path d="M16.9 22h8.2M21 17.9v8.2" stroke="#fff" stroke-width="2.200"/></svg>
<svg style="left:733px;top:255px" width="18" height="28" viewBox="0 0 18 28"><path d="M2 1l13 2v22L2 23z" fill="#e9edf2" stroke="#c3cad3" stroke-width=".8"/><path d="M2 13l13 1v11L2 23z" fill="#d5dbe3"/><circle cx="12" cy="21" r="5.5" fill="#4cb848" stroke="#2d8a2d" stroke-width=".8"/><path d="M9.0 21h6.1M12 18.0v6.1" stroke="#fff" stroke-width="2.200"/></svg>
<svg style="left:798px;top:252px" width="24" height="32" viewBox="0 0 24 32"><path d="M2 4h17l-2 22H4z" fill="#9aa0a8" stroke="#747a82" stroke-width=".8"/><ellipse cx="10.500" cy="4" rx="8.500" ry="2.500" fill="#c5cad1" stroke="#858b93" stroke-width=".8"/><path d="M7 9l2 13M13 8l-2 14" stroke="#d3d7dc" stroke-width="1.400"/><circle cx="17" cy="23" r="5.500" fill="#9d9d9d" stroke="#6f6f6f" stroke-width=".8"/><path d="M14.700 20.700l4.600 4.600M19.300 20.700l-4.600 4.600" stroke="#fff" stroke-width="1.900"/></svg>
<svg style="left:860px;top:252px" width="26" height="32" viewBox="0 0 26 32"><path d="M1 1h17l7 7v23H1z" fill="#fbfcfe" stroke="#6d8fc0" stroke-width=".9"/><path d="M18 1v7h7" fill="#e4ebf5" stroke="#6d8fc0" stroke-width=".8"/><path d="M4 5h5M4 7.500h4M15 7.500h3M4 12h18M4 15h18" stroke="#9fb0c8" stroke-width=".9"/></svg>
<div class="t " style="left:864px;top:252px;color:#1f8a2b;font-size:32px;line-height:40px;height:40px;font-weight:700;transform:scaleX(1.12);transform-origin:0 0">e</div>
<svg style="left:967px;top:254px" width="27" height="27" viewBox="0 0 27 27"><circle cx="13.500" cy="13.500" r="12.500" fill="#b4b4b4" stroke="#9a9a9a"/><circle cx="13.500" cy="13.500" r="10" fill="#a3a3a3"/><path d="M13.500 6l7 7.500h-4V20h-6v-6.500h-4z" fill="#fff"/></svg>
<svg style="left:1008px;top:254px" width="27" height="27" viewBox="0 0 27 27"><circle cx="13.500" cy="13.500" r="12.500" fill="#b4b4b4" stroke="#9a9a9a"/><circle cx="13.500" cy="13.500" r="10" fill="#a3a3a3"/><path d="M13.500 21l7-7.500h-4V7h-6v6.500h-4z" fill="#fff"/></svg>
<svg style="left:1045px;top:255px" width="32" height="28" viewBox="0 0 32 28"><rect x="1" y="1" width="24" height="18" fill="#f4f7fb" stroke="#9fb1cc" stroke-width=".8"/><rect x="1" y="1" width="24" height="3.500" fill="#c3d2ea"/><path d="M5 15l5-4 5 6L28 6l3 4-16 17z" fill="#e8412f" stroke="#b02a1c" stroke-width=".8"/></svg>
<svg style="left:1089px;top:252px" width="27" height="32" viewBox="0 0 27 32"><path d="M1 1h17l7 7v23H1z" fill="#fbfcfe" stroke="#6d8fc0" stroke-width=".9"/><path d="M18 1v7h7" fill="#e4ebf5" stroke="#6d8fc0" stroke-width=".8"/><path d="M4 5h5M4 7.500h4M15 7.500h3M4 12h18M4 15h18" stroke="#9fb0c8" stroke-width=".9"/><path d="M2 17l9 3h5v-4.500l9.500 6.500-9.500 6.500V24h-5l-9 3 4-5z" fill="#3db558" stroke="#1f8a3a" stroke-width=".8"/></svg>
<div class="a " style="left:584px;top:299px;width:398px;height:20px;background:#f0f0f0;border:1px solid #d9d9d9;border-bottom:none"></div>
<div class="a " style="left:637px;top:299px;width:1px;height:20px;background:#d9d9d9"></div>
<div class="t " style="left:584px;top:301px;width:53px;text-align:center;letter-spacing:-0.2px">Detaylar</div>
<div class="a " style="left:685px;top:299px;width:1px;height:20px;background:#d9d9d9"></div>
<div class="t " style="left:637px;top:301px;width:48px;text-align:center;letter-spacing:-0.2px">Notlar</div>
<div class="a " style="left:741px;top:299px;width:1px;height:20px;background:#d9d9d9"></div>
<div class="t " style="left:685px;top:301px;width:56px;text-align:center;letter-spacing:-0.2px">Sevkiyat</div>
<div class="a " style="left:817px;top:299px;width:1px;height:20px;background:#d9d9d9"></div>
<div class="t " style="left:741px;top:301px;width:76px;text-align:center;letter-spacing:-0.2px">Belge Dövizi</div>
<div class="a " style="left:864px;top:299px;width:1px;height:20px;background:#d9d9d9"></div>
<div class="t " style="left:817px;top:301px;width:47px;text-align:center;letter-spacing:-0.2px">Belge</div>
<div class="a " style="left:926px;top:299px;width:1px;height:20px;background:#d9d9d9"></div>
<div class="t " style="left:864px;top:301px;width:62px;text-align:center;letter-spacing:-0.2px">Sözleşme</div>
<div class="a " style="left:982px;top:299px;width:1px;height:20px;background:#d9d9d9"></div>
<div class="t " style="left:926px;top:301px;width:56px;text-align:center;letter-spacing:-0.2px">E-İrsaliye</div>
<div class="a " style="left:513px;top:319px;width:984px;height:115px;background:#fff;border:1px solid #d9d9d9"></div>
<div class="a " style="left:513px;top:296px;width:72px;height:24px;background:#fff;border:1px solid #d9d9d9;border-bottom:none"></div>
<div class="t " style="left:513px;top:299px;width:72px;text-align:center;letter-spacing:-0.2px">Fiş Bilgileri</div>
<div class="t " style="left:521px;top:326px;letter-spacing:-0.2px">İrsaliye Tarihi</div>
<div class="t " style="left:521px;top:350px;letter-spacing:-0.2px">İrsaliye No</div>
<div class="t " style="left:521px;top:375px;letter-spacing:-0.2px">Belge / Seri No</div>
<div class="t " style="left:521px;top:398px;letter-spacing:-0.2px">Cari Hesap</div>
<div class="a inp" style="left:607px;top:324px;width:120px;height:20px;border-color:#8a8a8a"></div>
<div class="t " style="left:612px;top:326px;letter-spacing:-0.5px">30.10.2018 10:24</div>
<div class="a " style="left:709px;top:326px;width:16px;height:16px;border:1px solid #4f86c6;background:linear-gradient(#d3e5f9,#a2c7ef);border-radius:2px"></div>
<svg style="left:712px;top:331px" width="10" height="7" viewBox="0 0 10 7"><path d="M1 1l4 4 4-4" fill="none" stroke="#14263f" stroke-width="1.800"/></svg>
<div class="t " style="left:735px;top:326px;letter-spacing:-0.2px">Düzenleme Zamanı</div>
<div class="a inp" style="left:845px;top:324px;width:120px;height:20px;border-color:#8a8a8a"></div>
<div class="t " style="left:850px;top:326px;letter-spacing:-0.5px">30.10.2018 10:24</div>
<div class="a " style="left:947px;top:326px;width:16px;height:16px;border:1px solid #4f86c6;background:linear-gradient(#d3e5f9,#a2c7ef);border-radius:2px"></div>
<svg style="left:950px;top:331px" width="10" height="7" viewBox="0 0 10 7"><path d="M1 1l4 4 4-4" fill="none" stroke="#14263f" stroke-width="1.800"/></svg>
<div class="a " style="left:607px;top:348px;width:323px;height:20px;background:#efefef;border:1px solid #d5d5d5"></div>
<div class="t " style="left:613px;top:350px;color:#777;letter-spacing:-0.55px">EIR2018000000001</div>
<svg style="left:934px;top:350px" width="16" height="16" viewBox="0 0 16 16"><g transform="rotate(-35 8 8)" fill="#f8d15a" stroke="#c08a14" stroke-width=".8" stroke-linejoin="round"><path d="M3.500 6.500c1.500-3.500 6-4 8.500-1l1.500-1.500.5 5.500-5.500-.5 1.700-1.600c-1.500-1.500-3.500-1-4.200.6z"/><path d="M12.500 9.500c-1.500 3.500-6 4-8.500 1l-1.500 1.500-.5-5.500 5.500.5-1.700 1.600c1.500 1.500 3.500 1 4.200-.6z"/></g></svg>
<div class="dd" style="left:956px;top:356px;border-top-color:#222"></div>
<div class="a inp" style="left:607px;top:372px;width:176px;height:21px;border-color:#555"></div>
<div class="a inp" style="left:791px;top:372px;width:177px;height:21px;border-color:#555"></div>
<div class="a inp" style="left:607px;top:396px;width:361px;height:20px;border-color:#8a8a8a"></div>
<div class="t " style="left:612px;top:398px;width:321px;letter-spacing:-0.42px;overflow:hidden">ADA DANIŞMANLIK DIŞ TİCARET LTD. ŞTİ. [ADA DANIŞMANI</div>
<div class="a eb" style="left:933px;top:398px;width:15px;height:15px;"></div>
<div class="a " style="left:936px;top:408px;width:2px;height:2px;background:#123"></div>
<div class="a " style="left:939px;top:408px;width:2px;height:2px;background:#123"></div>
<div class="a " style="left:942px;top:408px;width:2px;height:2px;background:#123"></div>
<div class="a eb2" style="left:950px;top:398px;width:15px;height:15px;"></div>
<div class="a " style="left:953px;top:402px;width:9px;height:7px;border:1px solid #5b7fb5;border-top:2px solid #5b7fb5;background:#f4f8fd"></div>
<div class="t " style="left:984px;top:326px;letter-spacing:-0.2px">İş Birimi</div>
<div class="t " style="left:984px;top:349px;letter-spacing:-0.2px">Ambar</div>
<div class="t " style="left:984px;top:372px;letter-spacing:-0.2px">Org. Birim</div>
<div class="t " style="left:984px;top:395px;letter-spacing:-0.2px">Ödeme Planı</div>
<div class="a inp" style="left:1060px;top:324px;width:200px;height:20px;border-color:#8a8a8a"></div>
<div class="a eb" style="left:1225px;top:326px;width:15px;height:15px;"></div>
<div class="a " style="left:1228px;top:336px;width:2px;height:2px;background:#123"></div>
<div class="a " style="left:1231px;top:336px;width:2px;height:2px;background:#123"></div>
<div class="a " style="left:1234px;top:336px;width:2px;height:2px;background:#123"></div>
<div class="a eb2" style="left:1242px;top:326px;width:15px;height:15px;"></div>
<div class="a " style="left:1245px;top:330px;width:9px;height:7px;border:1px solid #5b7fb5;border-top:2px solid #5b7fb5;background:#f4f8fd"></div>
<div class="a inp" style="left:1060px;top:347px;width:200px;height:20px;border-color:#8a8a8a"></div>
<div class="a eb" style="left:1225px;top:349px;width:15px;height:15px;"></div>
<div class="a " style="left:1228px;top:359px;width:2px;height:2px;background:#123"></div>
<div class="a " style="left:1231px;top:359px;width:2px;height:2px;background:#123"></div>
<div class="a " style="left:1234px;top:359px;width:2px;height:2px;background:#123"></div>
<div class="a eb2" style="left:1242px;top:349px;width:15px;height:15px;"></div>
<div class="a " style="left:1245px;top:353px;width:9px;height:7px;border:1px solid #5b7fb5;border-top:2px solid #5b7fb5;background:#f4f8fd"></div>
<div class="a inp" style="left:1060px;top:370px;width:200px;height:20px;border-color:#8a8a8a"></div>
<div class="a eb" style="left:1225px;top:372px;width:15px;height:15px;"></div>
<div class="a " style="left:1228px;top:382px;width:2px;height:2px;background:#123"></div>
<div class="a " style="left:1231px;top:382px;width:2px;height:2px;background:#123"></div>
<div class="a " style="left:1234px;top:382px;width:2px;height:2px;background:#123"></div>
<div class="a eb2" style="left:1242px;top:372px;width:15px;height:15px;"></div>
<div class="a " style="left:1245px;top:376px;width:9px;height:7px;border:1px solid #5b7fb5;border-top:2px solid #5b7fb5;background:#f4f8fd"></div>
<div class="a inp" style="left:1060px;top:393px;width:200px;height:20px;border-color:#8a8a8a"></div>
<div class="a eb" style="left:1225px;top:395px;width:15px;height:15px;"></div>
<div class="a " style="left:1228px;top:405px;width:2px;height:2px;background:#123"></div>
<div class="a " style="left:1231px;top:405px;width:2px;height:2px;background:#123"></div>
<div class="a " style="left:1234px;top:405px;width:2px;height:2px;background:#123"></div>
<div class="a eb2" style="left:1242px;top:395px;width:15px;height:15px;"></div>
<div class="a " style="left:1245px;top:399px;width:9px;height:7px;border:1px solid #5b7fb5;border-top:2px solid #5b7fb5;background:#f4f8fd"></div>
<div class="t " style="left:1065px;top:326px;width:159px;letter-spacing:-0.2px;overflow:hidden">1 - İç Anadolu Bölgesi [İç Anac</div>
<div class="t " style="left:1065px;top:349px;letter-spacing:-0.2px">Ankara</div>
<div class="t " style="left:1276px;top:328px;letter-spacing:-0.2px">İrsaliye Türü</div>
<div class="t " style="left:1276px;top:354px;letter-spacing:-0.2px">Durumu</div>
<div class="t " style="left:1276px;top:378px;letter-spacing:-0.2px">Yetki Kodu</div>
<div class="t " style="left:1276px;top:401px;letter-spacing:-0.2px">Satış Elemanı</div>
<div class="a " style="left:1353px;top:324px;width:130px;height:23px;background:#cccccc;border:1px solid #bfbfbf"></div>
<div class="t " style="left:1357px;top:328px;color:#838383;letter-spacing:-0.2px">Toptan Satış</div>
<svg style="left:1468px;top:333px" width="10" height="6" viewBox="0 0 10 6"><path d="M.5 .5l4.500 4.500 4.500-4.500" fill="none" stroke="#b5b5b5" stroke-width="1.100"/></svg>
<div class="a " style="left:1353px;top:350px;width:130px;height:23px;background:#e1e1e1;border:1px solid #adadad"></div>
<div class="t " style="left:1357px;top:354px;letter-spacing:-0.2px">Onaylı</div>
<svg style="left:1468px;top:359px" width="10" height="6" viewBox="0 0 10 6"><path d="M.5 .5l4.500 4.500 4.500-4.500" fill="none" stroke="#333" stroke-width="1.200"/></svg>
<div class="a inp" style="left:1353px;top:376px;width:130px;height:20px;border-color:#8a8a8a"></div>
<div class="a eb" style="left:1448px;top:378px;width:15px;height:15px;"></div>
<div class="a " style="left:1451px;top:388px;width:2px;height:2px;background:#123"></div>
<div class="a " style="left:1454px;top:388px;width:2px;height:2px;background:#123"></div>
<div class="a " style="left:1457px;top:388px;width:2px;height:2px;background:#123"></div>
<div class="a eb2" style="left:1465px;top:378px;width:15px;height:15px;"></div>
<div class="a " style="left:1468px;top:382px;width:9px;height:7px;border:1px solid #5b7fb5;border-top:2px solid #5b7fb5;background:#f4f8fd"></div>
<div class="a inp" style="left:1353px;top:399px;width:130px;height:20px;border-color:#8a8a8a"></div>
<div class="t " style="left:1358px;top:401px;width:89px;letter-spacing:-0.2px;overflow:hidden">Engin İlker Doğar</div>
<div class="a eb" style="left:1448px;top:401px;width:15px;height:15px;"></div>
<div class="a " style="left:1451px;top:411px;width:2px;height:2px;background:#123"></div>
<div class="a " style="left:1454px;top:411px;width:2px;height:2px;background:#123"></div>
<div class="a " style="left:1457px;top:411px;width:2px;height:2px;background:#123"></div>
<div class="a eb2" style="left:1465px;top:401px;width:15px;height:15px;"></div>
<div class="a " style="left:1468px;top:405px;width:9px;height:7px;border:1px solid #5b7fb5;border-top:2px solid #5b7fb5;background:#f4f8fd"></div>
<div class="a " style="left:513px;top:438px;width:990px;height:317px;background:#fff"></div>
<div class="a " style="left:1499px;top:438px;width:4px;height:317px;background:#f0f0f0"></div>
<div class="a " style="left:1475px;top:438px;width:24px;height:236px;background:#f7f7f7"></div>
<div class="a hdr" style="left:513px;top:438px;width:945px;height:23px;"></div>
<div class="a " style="left:537px;top:438px;width:1px;height:23px;background:linear-gradient(#f2f6fd,#9fbde8)"></div>
<div class="t b" style="left:541px;top:442px;">Tür</div>
<div class="a " style="left:636px;top:438px;width:1px;height:23px;background:linear-gradient(#f2f6fd,#9fbde8)"></div>
<div class="t b" style="left:640px;top:442px;letter-spacing:-0.30px;">Satır Öğesi</div>
<div class="a " style="left:796px;top:438px;width:1px;height:23px;background:linear-gradient(#f2f6fd,#9fbde8)"></div>
<div class="t b" style="left:800px;top:442px;">Birim/Paket</div>
<div class="a " style="left:916px;top:438px;width:1px;height:23px;background:linear-gradient(#f2f6fd,#9fbde8)"></div>
<div class="t b r" style="left:916px;top:442px;width:80px;">Miktar</div>
<div class="a " style="left:997px;top:438px;width:1px;height:23px;background:linear-gradient(#f2f6fd,#9fbde8)"></div>
<div class="t b r" style="left:997px;top:442px;width:139px;">Birim Fiyat</div>
<div class="a " style="left:1137px;top:438px;width:1px;height:23px;background:linear-gradient(#f2f6fd,#9fbde8)"></div>
<div class="t b r" style="left:1137px;top:442px;width:159px;">Tutar</div>
<div class="a " style="left:1297px;top:438px;width:1px;height:23px;background:linear-gradient(#f2f6fd,#9fbde8)"></div>
<div class="t b r" style="left:1297px;top:442px;width:99px;">KDV</div>
<div class="a " style="left:1397px;top:438px;width:1px;height:23px;background:linear-gradient(#f2f6fd,#9fbde8)"></div>
<div class="a " style="left:513px;top:461px;width:24px;height:23px;background:#dbe7fa;border-bottom:1px solid #c5d3ea"></div>
<div class="a " style="left:537px;top:461px;width:921px;height:23px;background:#fff;border-bottom:1px solid #d0d0d0"></div>
<div class="a " style="left:797px;top:461px;width:119px;height:22px;background:#6199cb"></div>
<div class="a " style="left:537px;top:461px;width:1px;height:23px;background:#d0d0d0"></div>
<div class="t " style="left:543px;top:465px;width:92px;letter-spacing:0.15px;overflow:hidden">Ürün/Hizmet</div>
<div class="a " style="left:636px;top:461px;width:1px;height:23px;background:#d0d0d0"></div>
<div class="t " style="left:642px;top:465px;width:153px;letter-spacing:-0.5px;overflow:hidden">001.01.01 [Casper Excalibur <span style="letter-spacing:-1px;font-size:10px">...</span></div>
<div class="a " style="left:796px;top:461px;width:1px;height:23px;background:#d0d0d0"></div>
<div class="t w" style="left:802px;top:465px;width:113px;letter-spacing:-0.15px;overflow:hidden">Adet</div>
<div class="a " style="left:916px;top:461px;width:1px;height:23px;background:#d0d0d0"></div>
<div class="t  r" style="left:916px;top:465px;width:79px;letter-spacing:-0.5px;">1</div>
<div class="a " style="left:997px;top:461px;width:1px;height:23px;background:#d0d0d0"></div>
<div class="t  r" style="left:997px;top:465px;width:138px;letter-spacing:-0.5px;">500,00</div>
<div class="a " style="left:1137px;top:461px;width:1px;height:23px;background:#d0d0d0"></div>
<div class="t  r" style="left:1137px;top:465px;width:158px;letter-spacing:-0.5px;">500,00</div>
<div class="a " style="left:1297px;top:461px;width:1px;height:23px;background:#d0d0d0"></div>
<div class="t  r" style="left:1297px;top:465px;width:98px;letter-spacing:-0.5px;">90,00</div>
<div class="a " style="left:1397px;top:461px;width:1px;height:23px;background:#d0d0d0"></div>
<div class="a" style="left:1398px;top:461px;width:60px;height:22px;overflow:hidden"><div class="t" style="left:54px;top:4px;letter-spacing:-0.5px;">590,00</div></div>
<div class="a " style="left:513px;top:484px;width:24px;height:23px;background:#dbe7fa;border-bottom:1px solid #c5d3ea"></div>
<div class="a " style="left:537px;top:484px;width:921px;height:23px;background:#e6ebfa;border-bottom:1px solid #d0d0d0"></div>
<div class="a " style="left:537px;top:484px;width:1px;height:23px;background:#d0d0d0"></div>
<div class="t " style="left:543px;top:488px;width:92px;letter-spacing:0.15px;overflow:hidden">Ürün/Hizmet</div>
<div class="a " style="left:636px;top:484px;width:1px;height:23px;background:#d0d0d0"></div>
<div class="t " style="left:642px;top:488px;width:153px;letter-spacing:-0.5px;overflow:hidden">001.01.02 [Casper Excalibur <span style="letter-spacing:-1px;font-size:10px">...</span></div>
<div class="a " style="left:796px;top:484px;width:1px;height:23px;background:#d0d0d0"></div>
<div class="t " style="left:802px;top:488px;width:113px;letter-spacing:-0.15px;overflow:hidden">Adet</div>
<div class="a " style="left:916px;top:484px;width:1px;height:23px;background:#d0d0d0"></div>
<div class="t  r" style="left:916px;top:488px;width:79px;letter-spacing:-0.5px;">1</div>
<div class="a " style="left:997px;top:484px;width:1px;height:23px;background:#d0d0d0"></div>
<div class="t  r" style="left:997px;top:488px;width:138px;letter-spacing:-0.5px;">1.000,00 $ = 5.628,70</div>
<div class="a " style="left:1137px;top:484px;width:1px;height:23px;background:#d0d0d0"></div>
<div class="t  r" style="left:1137px;top:488px;width:158px;letter-spacing:-0.5px;">1.000,00 $ = 5.628,70</div>
<div class="a " style="left:1297px;top:484px;width:1px;height:23px;background:#d0d0d0"></div>
<div class="t  r" style="left:1297px;top:488px;width:98px;letter-spacing:-0.5px;">450,30</div>
<div class="a " style="left:1397px;top:484px;width:1px;height:23px;background:#d0d0d0"></div>
<div class="a" style="left:1398px;top:484px;width:60px;height:22px;overflow:hidden"><div class="t" style="left:28px;top:4px;letter-spacing:-0.5px;">6.079,00</div></div>
<div class="t g" style="left:1302px;top:465px;letter-spacing:-0.5px">%18</div>
<div class="t g" style="left:1302px;top:488px;letter-spacing:-0.5px">%8</div>
<div class="t g" style="left:520px;top:488px;">2</div>
<svg style="left:522px;top:467px" width="7" height="11" viewBox="0 0 7 11"><path d="M0 0l7 5.500-7 5.500z" fill="#000"/></svg>
<div class="a " style="left:1458px;top:438px;width:17px;height:219px;background:#f0f0f0"></div>
<svg style="left:1462px;top:444px" width="9" height="6" viewBox="0 0 9 6"><path d="M.5 5.500l4-4 4 4" fill="none" stroke="#b0b0b0" stroke-width="1.300"/></svg>
<svg style="left:1462px;top:644px" width="9" height="6" viewBox="0 0 9 6"><path d="M.5 .5l4 4 4-4" fill="none" stroke="#b0b0b0" stroke-width="1.300"/></svg>
<div class="a " style="left:513px;top:657px;width:962px;height:16px;background:#f0f0f0"></div>
<div class="a " style="left:530px;top:657px;width:501px;height:16px;background:#cdcdcd"></div>
<svg style="left:518px;top:660px" width="7" height="9" viewBox="0 0 7 9"><path d="M5.500 .5l-4 4 4 4" fill="none" stroke="#444" stroke-width="1.500"/></svg>
<svg style="left:1445px;top:660px" width="7" height="9" viewBox="0 0 7 9"><path d="M1 .5l4 4-4 4" fill="none" stroke="#444" stroke-width="1.500"/></svg>
<svg style="left:1480px;top:441px" width="14" height="14" viewBox="0 0 14 14"><rect x="2" y="1" width="10" height="2" fill="#fff" stroke="#8b8b8b" stroke-width=".9"/><path d="M7 4.500l4.500 4.500H9v4H5V9H2.500z" fill="#fff" stroke="#8b8b8b" stroke-width=".9"/></svg>
<svg style="left:1480px;top:463px" width="14" height="12" viewBox="0 0 14 12"><path d="M6 1L1 5l5 4V6.500c3 0 4 1 4 4h2c0-5-2-7-6-7z" fill="#f3f3f3" stroke="#8b8b8b" stroke-width=".9"/><rect x="1" y="9" width="2.500" height="2.500" fill="#8b8b8b"/><path d="M5 11h8" stroke="#8b8b8b"/></svg>
<svg style="left:1480px;top:487px" width="14" height="12" viewBox="0 0 14 12"><rect x="1" y="0" width="2.500" height="2.500" fill="#3a66b8"/><path d="M5 1h8" stroke="#3a66b8"/><path d="M11 2c1 5-2 7-5 7v2.500L1 8l5-3.500V7c2 0 3-1 3-4z" fill="#e9a81c" stroke="#9a6a08" stroke-width=".8"/></svg>
<svg style="left:1480px;top:508px" width="14" height="15" viewBox="0 0 14 15"><path d="M5 .5h4v4h2.500L7 9 2.500 4.500H5z" fill="#e9a81c" stroke="#9a6a08" stroke-width=".8"/><rect x="2" y="11" width="10" height="3" rx="1" fill="#cfe0f5" stroke="#4c74b8" stroke-width=".9"/></svg>
<div class="a " style="left:1478px;top:528px;width:18px;height:1px;background:#8a8a8a"></div>
<svg style="left:1479px;top:539px" width="16" height="14" viewBox="0 0 16 14"><path d="M.5 3h5v-2L9.500 4 5.500 7v-2h-5z" fill="#fde9a8" stroke="#b8860b" stroke-width=".9" stroke-linejoin="round"/><path d="M11.500 3.5h2v2h2v2h-2v2h-2v-2h-2v-2h2z" fill="#fde9a8" stroke="#b8860b" stroke-width=".9"/><rect x="1.500" y="9.5" width="2" height="2" fill="#dfe8f7" stroke="#4c74b8" stroke-width=".8"/><path d="M5 10.500h6" stroke="#4c74b8" stroke-width=".9"/></svg>
<svg style="left:1479px;top:560px" width="16" height="15" viewBox="0 0 16 15"><rect x="1.500" y="1.5" width="2" height="2" fill="#dfe8f7" stroke="#4c74b8" stroke-width=".8"/><path d="M5 2.500h5" stroke="#4c74b8" stroke-width=".9"/><path d="M.5 8h5v-2L9.500 9 5.500 12v-2h-5z" fill="#fde9a8" stroke="#b8860b" stroke-width=".9" stroke-linejoin="round"/><path d="M11.500 2.5h2v2h2v2h-2v2h-2v-2h-2v-2h2z" fill="#fde9a8" stroke="#b8860b" stroke-width=".9"/></svg>
<svg style="left:1479px;top:580px" width="16" height="17" viewBox="0 0 16 17"><rect x="1.500" y="1" width="2" height="2" fill="#dfe8f7" stroke="#4c74b8" stroke-width=".8"/><rect x="1.500" y="5" width="2" height="2" fill="#dfe8f7" stroke="#4c74b8" stroke-width=".8"/><path d="M5 2h5M5 6h3" stroke="#4c74b8" stroke-width=".9"/><path d="M.5 11h5v-2L9.500 12 5.500 15v-2h-5z" fill="#d5dff0" stroke="#3f5f9c" stroke-width=".9" stroke-linejoin="round"/><path d="M11.500 6.5h2v2h2v2h-2v2h-2v-2h-2v-2h2z" fill="#d5dff0" stroke="#3f5f9c" stroke-width=".9"/></svg>
<div class="a " style="left:1478px;top:602px;width:18px;height:1px;background:#8a8a8a"></div>
<svg style="left:1481px;top:612px" width="13" height="13" viewBox="0 0 13 13"><path d="M1 2.500L2.500 1l4 3.500 4-3.500L12 2.500 8.500 6.500 12 10.500 10.500 12l-4-3.500-4 3.500L1 10.500 4.500 6.500z" fill="#e02b3a" stroke="#b01623" stroke-width=".7"/></svg>
<div class="a " style="left:516px;top:692px;width:538px;height:1px;background:#9a9a9a"></div>
<div class="a " style="left:516px;top:674px;width:45px;height:19px;background:#fff;border:1px solid #9a9a9a;border-bottom:none;border-radius:2px 2px 0 0"></div>
<div class="t " style="left:520px;top:676px;letter-spacing:-0.2px">Barkod</div>
<div class="a " style="left:516px;top:694px;width:539px;height:21px;background:#fff;border:1px solid #555"></div>
<div class="t " style="left:1063px;top:679px;letter-spacing:-0.2px">Hesaplan KDV</div>
<div class="a " style="left:1155px;top:679px;width:110px;height:15px;background:#f0f0f0"></div>
<div class="t b r" style="left:1155px;top:679px;width:107px;">540,30</div>
<div class="t " style="left:1273px;top:679px;letter-spacing:-0.2px">Toplam Tutar</div>
<div class="a " style="left:1365px;top:679px;width:110px;height:15px;background:#f0f0f0"></div>
<div class="t b r" style="left:1365px;top:679px;width:107px;">6.128,70</div>
<div class="t " style="left:1063px;top:697px;letter-spacing:-0.2px">Toplam Masraf</div>
<div class="a " style="left:1155px;top:697px;width:110px;height:15px;background:#f0f0f0"></div>
<div class="t b r" style="left:1155px;top:697px;width:107px;">0,00</div>
<div class="t " style="left:1273px;top:697px;letter-spacing:-0.2px">Toplam İndirim</div>
<div class="a " style="left:1365px;top:697px;width:110px;height:15px;background:#f0f0f0"></div>
<div class="t b r" style="left:1365px;top:697px;width:107px;">0,00</div>
<div class="t " style="left:1063px;top:715px;letter-spacing:-0.2px">Toplam Ek Vergi</div>
<div class="a " style="left:1155px;top:715px;width:110px;height:15px;background:#f0f0f0"></div>
<div class="t b r" style="left:1155px;top:715px;width:107px;">0,00</div>
<div class="t " style="left:1273px;top:715px;letter-spacing:-0.2px">Ödenecek Tutar</div>
<div class="a " style="left:1365px;top:715px;width:110px;height:15px;background:#f0f0f0"></div>
<div class="t b r" style="left:1365px;top:715px;width:107px;">6.669,00</div>
<div class="t " style="left:1063px;top:733px;letter-spacing:-0.2px">Satır Sayısı</div>
<div class="a " style="left:1155px;top:733px;width:110px;height:15px;background:#f0f0f0"></div>
<div class="t b r" style="left:1155px;top:733px;width:107px;">2</div>
</body></html>
